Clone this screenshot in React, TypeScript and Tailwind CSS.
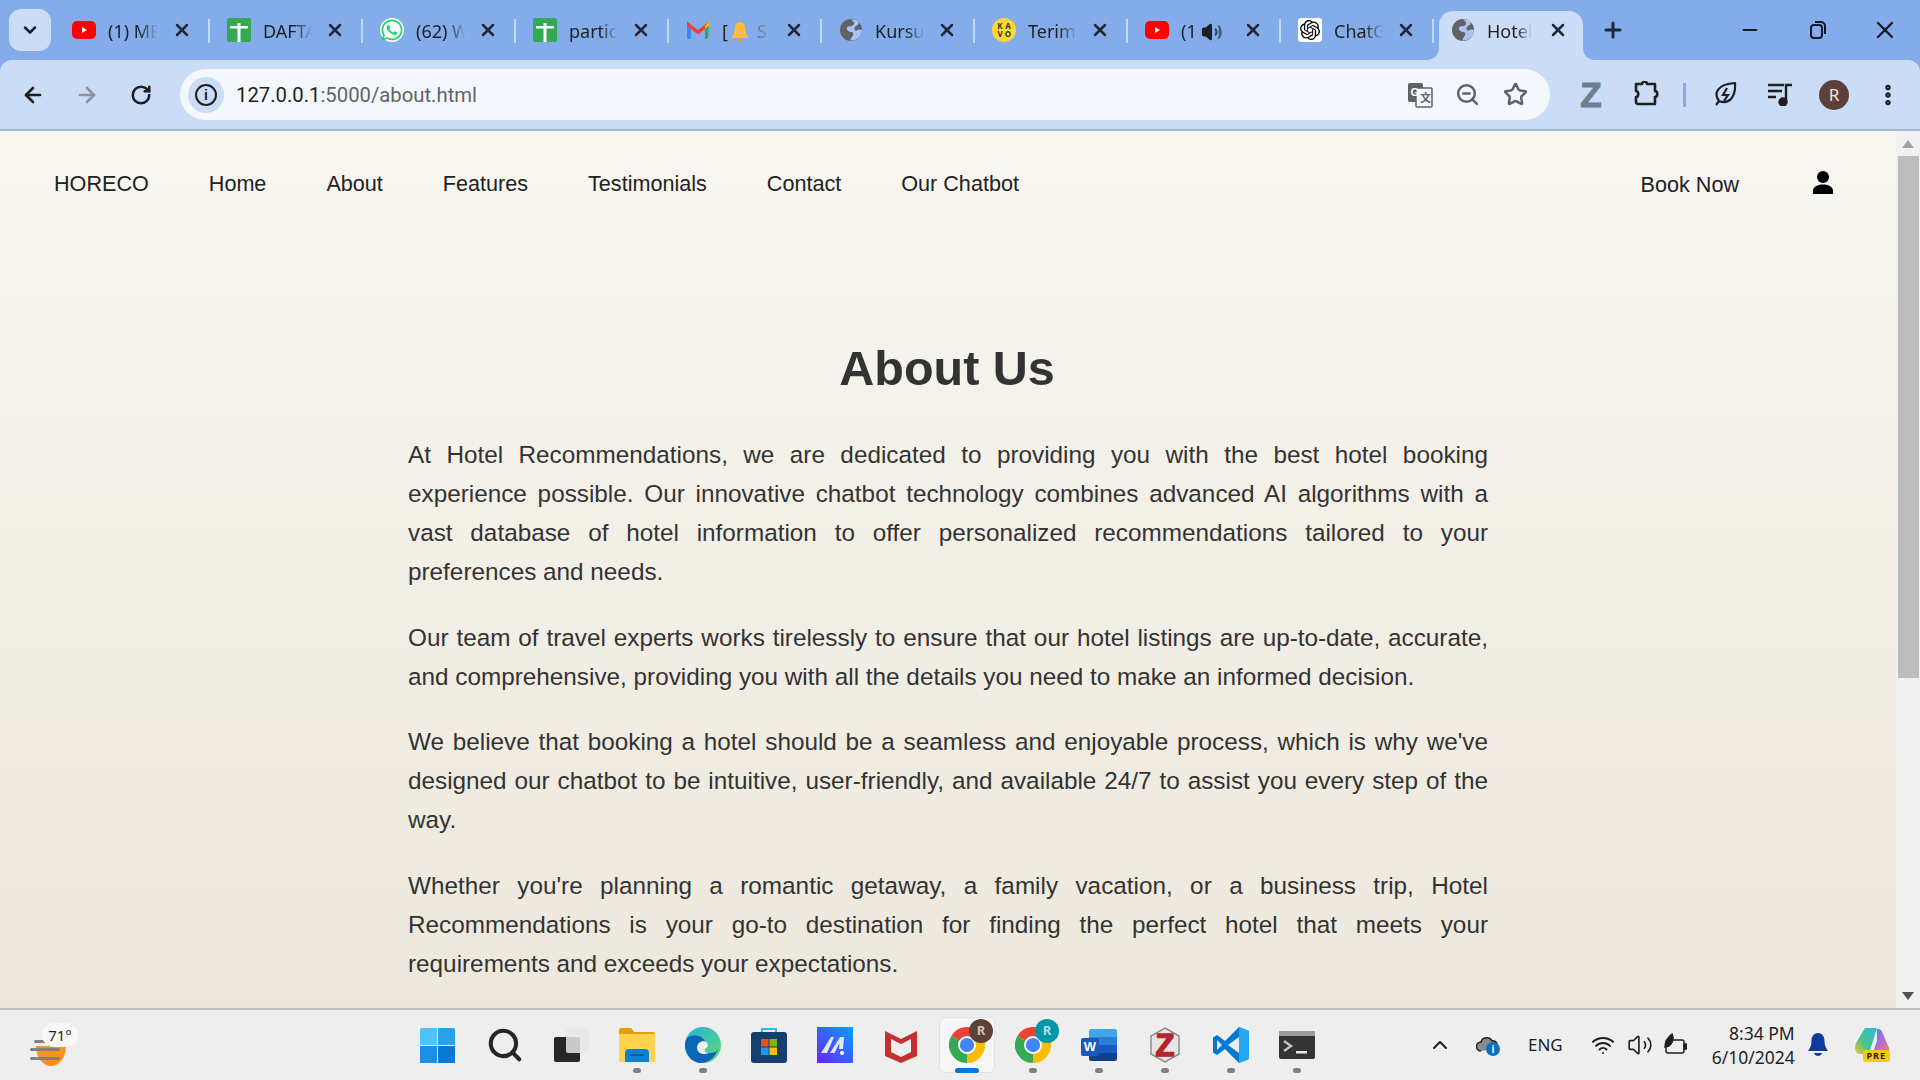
import { ArrowLeft, ArrowRight, RotateCw, X, Plus, Minus, ChevronDown, ChevronUp, Search, ZoomOut, Star, EllipsisVertical, Wifi, Volume2 } from 'lucide-react';
import { FaWhatsapp } from 'react-icons/fa';
import { SiOpenai } from 'react-icons/si';
import type { ReactNode } from 'react';

const YouTube = () => (
  <svg width="24" height="24" viewBox="0 0 24 24"><rect y="3" width="24" height="18" rx="5" fill="#f00" /><path d="M10 9l5 3-5 3z" fill="#fff" /></svg>
);
const Sheets = () => (
  <svg width="24" height="24" viewBox="0 0 24 24"><rect width="24" height="24" rx="2" fill="#34a853" /><path d="M10.500 5h3v3h7.500v2.500h-7.500V24h-3V10.500H3V8h7.500z" fill="#fff" /></svg>
);
const Whatsapp = () => (
  <div className="w-6 h-6 rounded-full bg-white flex items-center justify-center text-[#25d366]"><FaWhatsapp size={24} /></div>
);
const Gmail = () => (
  <svg width="24" height="24" viewBox="0 0 24 24">
    <path d="M1 5l4 3v13H2.500A1.500 1.500 0 011 19.500z" fill="#4285f4" />
    <path d="M23 5l-4 3v13h1.500a1.500 1.500 0 001.500-1.500z" fill="#34a853" />
    <path d="M1 3.500L12 12l11-8.500V8l-11 8.500L1 8z" fill="#ea4335" />
    <path d="M19 8l4-4.500V8l-4 3z" fill="#fbbc04" />
  </svg>
);
const Globe = () => (
  <svg width="24" height="24" viewBox="0 0 24 24">
    <circle cx="12" cy="12" r="11" fill="#5f6368" />
    <path d="M12 1.500c3 2 4 3.500 2.500 5.500S9 7.500 8 9.500 9.500 14 12 14s3 2 1.500 4-2 3.500-2 4.500A10.500 10.500 0 0023 12c-2-1-4-.5-5 .5s-3-.500-2.500-2.500 2-2 3.500-3.500 0-3-1-4a10 10 0 00-6-1z" fill="#a9c4ee" />
  </svg>
);
const Terima = () => (
  <div className="w-6 h-6 rounded-full bg-[#fdd835] grid grid-cols-2 place-items-center px-1 py-1 text-[8px] leading-none font-bold text-[#333]">
    <span>K</span><span>A</span><span>V</span><span>O</span>
  </div>
);
const Bell = () => (
  <svg width="18" height="20" viewBox="0 0 18 20" className="shrink-0"><path d="M9 0c4 0 5.500 4 5.500 8 0 3 1 5 3.500 8H0c2.500-3 3.500-5 3.500-8C3.500 4 5 0 9 0z" fill="#fbbc3d" /><circle cx="9" cy="18" r="2" fill="#f59e0b" /></svg>
);

const tabs: { icon: ReactNode; label: ReactNode }[] = [
  { icon: <YouTube />, label: '(1) ME' },
  { icon: <Sheets />, label: 'DAFTA' },
  { icon: <Whatsapp />, label: '(62) W' },
  { icon: <Sheets />, label: 'partici' },
  { icon: <Gmail />, label: <span className="flex items-center"><span>[</span><span className="ml-[3px]"><Bell /></span><span className="ml-2 text-[#5f6368]">S</span></span> },
  { icon: <Globe />, label: 'Kursus' },
  { icon: <Terima />, label: 'Terima' },
  { icon: <YouTube />, label: <span className="flex items-center">(1<Volume2 size={22} className="shrink-0 ml-1 text-[#1f1f1f] fill-[#1f1f1f]" /></span> },
  { icon: <div className="w-6 h-6 rounded-[3px] bg-white flex items-center justify-center text-black"><SiOpenai size={20} /></div>, label: 'ChatG' },
];

const Tab = ({ icon, label, first }: { icon: ReactNode; label: ReactNode; first: boolean }) => (
  <div className={`${first ? 'w-[155px]' : 'w-[153px]'} h-[49px] flex items-center pl-[17px] pb-[11px] relative shrink-0`}>
    <div className="w-6 h-6 shrink-0">{icon}</div>
    <div className="ml-3 mt-[3px] w-[56px] whitespace-nowrap text-[18px] text-[#1f1f1f] [mask-image:linear-gradient(to_right,black_55%,transparent_88%)]">{label}</div>
    <X size={20} strokeWidth={3} className="absolute right-[18px] top-[9px] text-[#1f2937]" />
    <div className="absolute right-0 top-[8px] w-[2px] h-6 bg-[#c7d8f3]" />
  </div>
);

const TabStrip = () => (
  <div className="h-[60px] bg-[#84acea] flex items-end shrink-0 relative">
    <div className="absolute left-[9px] top-[9px] w-[42px] h-[42px] rounded-xl bg-[#cadcf6] flex items-center justify-center">
      <ChevronDown size={20} strokeWidth={3} className="text-[#1f1f1f]" />
    </div>
    <div className="ml-[55px] flex items-end">
      {tabs.map((t, i) => <Tab key={i} icon={t.icon} label={t.label} first={i === 0} />)}
      <div className="w-[144px] h-[49px] ml-[5px] bg-[#cadcf6] rounded-t-[14px] flex items-center pl-3 pb-[11px] relative shrink-0">
        <div className="w-6 h-6 shrink-0"><Globe /></div>
        <div className="ml-3 mt-[3px] w-[50px] whitespace-nowrap text-[18px] text-[#1f1f1f] [mask-image:linear-gradient(to_right,black_60%,transparent_90%)]">Hotel</div>
        <X size={20} strokeWidth={3} className="absolute left-[109px] top-[9px] text-[#1f2937]" />
        <svg className="absolute -left-3 bottom-0" width="12" height="12" viewBox="0 0 12 12"><path d="M12 0v12H0c7 0 12-5 12-12z" fill="#cadcf6" /></svg>
        <svg className="absolute -right-3 bottom-0" width="12" height="12" viewBox="0 0 12 12"><path d="M0 0v12h12C5 12 0 7 0 0z" fill="#cadcf6" /></svg>
      </div>
      <Plus size={24} strokeWidth={3} className="ml-[18px] mb-[18px] text-[#1f2937]" />
    </div>
    <div className="ml-auto flex items-center h-full text-[#111827]">
      <div className="w-[68px] flex justify-center"><Minus size={22} strokeWidth={2} /></div>
      <div className="w-[68px] flex justify-center">
        <svg width="18" height="20" viewBox="0 0 18 20" fill="none" stroke="currentColor" strokeWidth="2"><rect x="2" y="5" width="11" height="13" rx="3" /><path d="M6 2h6a4 4 0 014 4v8" /></svg>
      </div>
      <div className="w-[68px] flex justify-center pr-[2px]"><X size={28} strokeWidth={2} /></div>
    </div>
  </div>
);

const Toolbar = () => (
  <div className="h-[71px] bg-[#84acea] shrink-0">
    <div className="h-full bg-[#cadcf6] rounded-t-[12px] border-b-2 border-[#a6b6d2] flex items-start pt-[9px] pl-[6px]">
      <div className="w-[54px] h-[51px] flex items-center justify-center text-[#1f1f1f]"><ArrowLeft size={24} strokeWidth={2.600} /></div>
      <div className="w-[54px] h-[51px] flex items-center justify-center text-[#8a929e]"><ArrowRight size={24} strokeWidth={2.600} /></div>
      <div className="w-[54px] h-[51px] flex items-center justify-center text-[#1f1f1f]"><RotateCw size={22} strokeWidth={2.800} /></div>
      <div className="ml-3 w-[1370px] h-[51px] rounded-full bg-[#f4f7fc] flex items-center pl-2">
        <div className="w-[36px] h-[36px] rounded-full bg-[#cadcf6] flex items-center justify-center">
          <div className="w-[22px] h-[22px] rounded-full border-2 border-[#1f1f1f] flex items-center justify-center text-[14px] font-bold leading-none text-[#1f1f1f] font-['Liberation_Sans',sans-serif]">i</div>
        </div>
        <div className="ml-[12px] mt-px text-[20.300px] text-[#5f6368] font-['Roboto',sans-serif]"><span className="text-[#1f1f1f]">127.0.0.1</span>:5000/about.html</div>
        <div className="ml-auto flex items-center text-[#5f6368]">
          <svg width="26" height="26" viewBox="0 0 26 26" className="mr-[22px]"><rect x="1" y="1" width="15" height="19" rx="2" fill="#5f6368" /><rect x="9" y="6" width="16" height="19" rx="1" fill="#f4f7fc" stroke="#5f6368" strokeWidth="1.500" /><text x="3.500" y="14" fontSize="11" fontWeight="700" fill="#fff" fontFamily="Liberation Sans">G</text><text x="13" y="20" fontSize="11" fontWeight="700" fill="#5f6368" fontFamily="Noto Sans CJK SC">文</text></svg>
          <ZoomOut size={25} strokeWidth={2.400} className="mr-[23px]" />
          <Star size={25} strokeWidth={2.400} className="mr-[22px]" />
        </div>
      </div>
      <div className="ml-[31px] w-5 h-[51px] flex items-center justify-center text-[35px] leading-none font-bold text-[#6b7f92] [-webkit-text-stroke:1px_#6b7f92] font-['Liberation_Sans',sans-serif]">Z</div>
      <svg width="26" height="26" viewBox="0 0 26 26" fill="none" stroke="#1f1f1f" strokeWidth="2.600" className="ml-[32px] mt-[12px]"><path d="M3 3h6c0-3 5-3 5 0h8v7c3 0 3 6 0 6v7H5c-1 0-2-1-2-2v-5c3 0 3-6 0-6z" strokeLinejoin="round" /></svg>
      <div className="ml-[24px] mt-[14px] w-[3px] h-6 bg-[#84acea]" />
      <svg width="24" height="26" viewBox="0 0 24 26" fill="none" stroke="#1f1f1f" strokeWidth="2.200" className="ml-[27px] mt-[12px]"><path d="M3 24l3-4M6 20C0 12 5 3 22 2c1 14-6 22-16 18z" strokeLinejoin="round" /><path d="M14 7l-4 7h5l-4 6" /></svg>
      <svg width="24" height="24" viewBox="0 0 24 24" fill="none" stroke="#1f1f1f" strokeWidth="2.400" className="ml-[31px] mt-[13px]"><path d="M0 3h16M0 9h14M0 15h8M18 20V3h6" /><circle cx="15" cy="20" r="3.500" fill="#1f1f1f" /></svg>
      <div className="ml-[27px] mt-[11px] w-[30px] h-[30px] rounded-full bg-[#5d4037] flex items-center justify-center text-[#f5e6df] text-[17px] font-['Noto_Sans',sans-serif]">R</div>
      <EllipsisVertical size={26} strokeWidth={3} className="ml-[26px] mt-[13px] text-[#1f1f1f]" />
    </div>
  </div>
);

const navLinks = ['Home', 'About', 'Features', 'Testimonials', 'Contact', 'Our Chatbot'];

const paragraphs = [
  'At Hotel Recommendations, we are dedicated to providing you with the best hotel booking experience possible. Our innovative chatbot technology combines advanced AI algorithms with a vast database of hotel information to offer personalized recommendations tailored to your preferences and needs.',
  'Our team of travel experts works tirelessly to ensure that our hotel listings are up-to-date, accurate, and comprehensive, providing you with all the details you need to make an informed decision.',
  "We believe that booking a hotel should be a seamless and enjoyable process, which is why we've designed our chatbot to be intuitive, user-friendly, and available 24/7 to assist you every step of the way.",
  "Whether you're planning a romantic getaway, a family vacation, or a business trip, Hotel Recommendations is your go-to destination for finding the perfect hotel that meets your requirements and exceeds your expectations.",
];

const Page = () => (
  <div className="flex-1 min-w-0 overflow-hidden bg-gradient-to-b from-[#f8f6f1] to-[#ede8dc] font-['Liberation_Sans',sans-serif]">
    <nav className="h-[106px] flex items-center pl-[54px] pr-[63px] text-[21.600px] text-[#222]">
      <div className="flex gap-[60px] mt-px">
        <span>HORECO</span>
        {navLinks.map((l) => <span key={l}>{l}</span>)}
      </div>
      <span className="ml-auto mt-[2px]">Book Now</span>
      <svg width="20" height="23" viewBox="0 0 20 23" className="ml-[74px] -mt-[4px]"><circle cx="10" cy="6" r="6" fill="#000" /><path d="M0 23v-3c0-4 4-6.500 10-6.500s10 2.500 10 6.500v3z" fill="#000" /></svg>
    </nav>
    <main className="w-[1080px] mx-auto mt-[102px]">
      <h1 className="text-[48.500px] leading-[58px] font-bold text-[#333] text-center mb-[38px] -translate-x-px">About Us</h1>
      {paragraphs.map((p, i) => (
        <p key={i} className="text-[24.300px] leading-[39px] text-[#333] text-justify mb-[26.700px]">{p}</p>
      ))}
    </main>
  </div>
);

const ScrollBar = () => (
  <div className="w-6 bg-[#f1f1f1] flex flex-col items-center shrink-0">
    <div className="h-[25px] flex items-center justify-center w-full"><div className="w-0 h-0 border-x-[6px] border-x-transparent border-b-[8px] border-b-[#a3a3a3]" /></div>
    <div className="w-[21px] h-[522px] bg-[#bdbdbd]" />
    <div className="mt-auto h-[25px] flex items-center justify-center w-full"><div className="w-0 h-0 border-x-[6px] border-x-transparent border-t-[8px] border-t-[#505050]" /></div>
  </div>
);

const ChromeLogo = ({ badgeBg }: { badgeBg: string }) => (
  <div className="relative w-9 h-9">
    <svg width="36" height="36" viewBox="0 0 48 48">
      <path d="M24 24L3.200 12A24 24 0 0144.800 12z" fill="#ea4335" />
      <path d="M24 24L3.200 12A24 24 0 0024 48z" fill="#34a853" />
      <path d="M24 24L44.800 12A24 24 0 0124 48z" fill="#fbbc04" />
      <circle cx="24" cy="24" r="12" fill="#fff" /><circle cx="24" cy="24" r="9.500" fill="#4285f4" />
    </svg>
    <div className={`absolute -top-[8px] -right-[8px] w-6 h-6 rounded-full flex items-center justify-center text-[13px] font-bold text-white/70 font-['Noto_Sans',sans-serif] ${badgeBg}`}>R</div>
  </div>
);

const slots: { icon: ReactNode; dot?: boolean; active?: boolean }[] = [
  { icon: <div className="grid grid-cols-2 gap-[1px] w-[35px] h-[35px] -translate-x-[2px]"><div className="bg-[#4fc3f7] rounded-tl-[2px]" /><div className="bg-[#29a0ea] rounded-tr-[2px]" /><div className="bg-[#1a8fe3]" /><div className="bg-[#0a78d4]" /></div> },
  { icon: <Search size={38} strokeWidth={2.600} className="text-[#262626]" /> },
  { icon: <svg width="36" height="36" viewBox="0 0 36 36"><rect x="1" y="10" width="26" height="25" rx="2" fill="#262626" /><rect x="13" y="1" width="23" height="25" rx="2" fill="#e8e8e8" fillOpacity="0.85" /></svg> },
  { dot: true, icon: <svg width="36" height="36" viewBox="0 0 36 36"><path d="M0 3a2 2 0 012-2h10l3 4h19a2 2 0 012 2v28H0z" fill="#e3a008" /><path d="M0 7h36v28H0z" fill="#ffd250" /><path d="M6 35V26a4 4 0 014-4h16a4 4 0 014 4v9z" fill="#0f7fd1" /><rect x="11" y="27" width="14" height="2" fill="#0b5fa3" /></svg> },
  { dot: true, icon: <svg width="36" height="36" viewBox="0 0 36 36"><defs><linearGradient id="e1" x1="0" y1="0" x2="1" y2="1"><stop offset="0" stopColor="#27b4e0" /><stop offset="1" stopColor="#62d96b" /></linearGradient></defs><circle cx="18" cy="18" r="18" fill="url(#e1)" /><path d="M0 18C0 9 8 7 14 9c6 2 8 8 5 11-3 2 0 6 5 6 4 0 7-1 9-4-3 9-10 14-17 14C7 36 0 28 0 18z" fill="#0c66b8" /><path d="M12 21c0-5 5-8 9-6 3 2 2 5 0 6-3 2-1 5 3 5-7 3-12-1-12-5z" fill="#eeeeee" /></svg> },
  { icon: <svg width="36" height="36" viewBox="0 0 36 36"><path d="M11 7V2h14v5" fill="none" stroke="#29b6f6" strokeWidth="2" /><rect y="5" width="36" height="31" rx="3" fill="#173f6e" /><rect x="10" y="12" width="7.500" height="7.500" fill="#e8502a" /><rect x="18.500" y="12" width="7.500" height="7.500" fill="#7cb518" /><rect x="10" y="20.500" width="7.500" height="7.500" fill="#1c9be6" /><rect x="18.500" y="20.500" width="7.500" height="7.500" fill="#fbbc04" /></svg> },
  { icon: <svg width="36" height="36" viewBox="0 0 36 36"><defs><linearGradient id="m1" x1="0" y1="1" x2="1" y2="0"><stop offset="0" stopColor="#6b21ff" /><stop offset="1" stopColor="#08a0ff" /></linearGradient></defs><rect width="36" height="36" fill="url(#m1)" /><path d="M4 26L14 10h3l-7 16zM13 26l10-16h4l-1 12h-4l.5-6-5 10z" fill="#e0e7ff" /><circle cx="25" cy="26" r="2" fill="#fff" /></svg> },
  { icon: <svg width="32" height="36" viewBox="0 0 32 36"><path d="M0 4l16 8 16-8v25l-16 7-16-7z" fill="#c62f2f" /><path d="M6 12l10 5 10-5v13l-10 5-10-5z" fill="#eeeeee" /></svg> },
  { active: true, icon: <ChromeLogo badgeBg="bg-[#5d4037]" /> },
  { dot: true, icon: <ChromeLogo badgeBg="bg-[#0097a7]" /> },
  { dot: true, icon: <div className="relative w-9 h-8 flex justify-end"><div className="w-7 h-8 rounded-[2px] flex flex-col overflow-hidden"><div className="flex-1 bg-[#41a5ee]" /><div className="flex-1 bg-[#2b7cd3]" /><div className="flex-1 bg-[#185abd]" /><div className="flex-1 bg-[#103f91]" /></div><div className="absolute left-0 top-[9px] w-[18px] h-[18px] bg-[#185abd] rounded-[2px] flex items-center justify-center text-white text-[13px] font-bold font-['Liberation_Sans',sans-serif]">W</div></div> },
  { dot: true, icon: <div className="relative w-[30px] h-9 flex items-center justify-center"><svg width="30" height="36" viewBox="0 0 30 36" className="absolute"><path d="M15 1l14 8v18l-14 8-14-8V9z" fill="#e5e5e5" stroke="#8d8d8d" strokeWidth="1.500" /></svg><span className="relative text-[31px] font-bold text-[#b3262b] [-webkit-text-stroke:1.500px_#b3262b] leading-none font-['Liberation_Sans',sans-serif]">Z</span></div> },
  { dot: true, icon: <svg width="36" height="36" viewBox="0 0 36 36"><path d="M26 0L12 14 4 8 0 10.500v15L4 28l8-6 14 14 10-4V4z" fill="#0078d4" /><path d="M26 0l10 4v28l-10 4z" fill="#23a9f2" /><path d="M26 10L15 18l11 8z" fill="#eeeeee" /><path d="M4 13l5 5-5 5z" fill="#eeeeee" /></svg> },
  { dot: true, icon: <svg width="36" height="28" viewBox="0 0 36 28"><rect width="36" height="28" rx="2" fill="#333" /><path d="M0 2a2 2 0 012-2h32a2 2 0 012 2v3H0z" fill="#9b9b9b" /><path d="M5 10l7 5-7 5" fill="none" stroke="#c0c0c0" strokeWidth="2.500" /><rect x="17" y="20" width="11" height="2.500" fill="#e6e6e6" /></svg> },
];

const Taskbar = () => (
  <div className="h-[72px] bg-[#eeeeee] border-t-2 border-[#bfbfbf] flex items-center shrink-0 font-['Noto_Sans',sans-serif] text-[#1f1f1f]">
    <div className="w-[406px] pl-[30px] shrink-0">
      <div className="relative w-[38px] h-[42px]">
        <svg width="38" height="42" viewBox="0 0 38 42" className="absolute left-0 top-0"><path d="M6 22h30c0 12-7 20-15 20S6 34 6 22z" fill="#f7931e" /><rect x="4" y="16" width="28" height="3" rx="1.500" fill="#808080" /><rect x="0" y="24" width="30" height="3" rx="1.500" fill="#808080" /><rect x="0" y="33" width="30" height="3" rx="1.500" fill="#808080" /></svg>
        <div className="absolute left-[12px] -top-[1px] w-[36px] h-[24px] rounded-full bg-[#f8f8f8] text-[15px] leading-[24px] text-center">71°</div>
      </div>
    </div>
    <div className="flex">
      {slots.map((s, i) => (
        <div key={i} className="w-[66px] h-[70px] flex items-center justify-center relative">
          {s.active && <div className="absolute left-[5px] top-[7px] w-[56px] h-[56px] rounded-md bg-[#f6f6f6] border border-[#e3e3e3]" />}
          <div className="relative flex items-center justify-center">{s.icon}</div>
          {s.dot && <div className="absolute bottom-[7px] left-[29px] w-2 h-[5px] rounded-full bg-[#808080]" />}
          {s.active && <div className="absolute bottom-[7px] left-[21px] w-6 h-[5px] rounded-full bg-[#0078d4]" />}
        </div>
      ))}
    </div>
    <div className="ml-[98px] flex items-center">
      <ChevronUp size={24} strokeWidth={2} />
      <div className="relative ml-[24px] w-[24px] h-[22px]">
        <svg width="22" height="18" viewBox="0 0 22 18"><path d="M5 17a4.500 4.500 0 010-9c1-5 9-6 11-1a4 4 0 012 8" fill="#8a8a8a" stroke="#222" strokeWidth="1.500" /></svg>
        <div className="absolute right-0 bottom-0 w-[14px] h-[14px] rounded-full bg-[#0b6fc4] text-white text-[10px] leading-[14px] text-center font-bold">i</div>
      </div>
      <span className="ml-[28px] text-[17px]">ENG</span>
      <Wifi size={24} strokeWidth={2} className="ml-[28px]" />
      <Volume2 size={26} strokeWidth={1.500} className="ml-3" />
      <svg width="24" height="24" viewBox="0 0 24 24" fill="none" stroke="#1f1f1f" strokeWidth="1.500" className="ml-2.5"><rect x="3" y="7" width="18" height="13" rx="2" /><rect x="21" y="11" width="3" height="5" fill="#1f1f1f" /><path d="M2 14C2 8 5 4 9 1c2 4 1 9-3 12z" fill="#1f1f1f" /></svg>
      <div className="ml-[24px] w-[84px] text-right text-[17.500px] leading-[24px] whitespace-nowrap flex flex-col items-end">
        <span>8:34 PM</span>
        <span>6/10/2024</span>
      </div>
      <svg width="20" height="24" viewBox="0 0 20 24" className="ml-[13px]"><path d="M10 0c4.500 0 6.500 4 6.500 8 0 4 1 6.500 3.500 10H0c2.500-3.500 3.500-6 3.500-10C3.500 4 5.500 0 10 0z" fill="#0f3a9d" /><path d="M6 20h8c-1 4-7 4-8 0z" fill="#0f3a9d" /></svg>
      <div className="relative ml-[27px] w-[35px] h-[34px]">
        <svg width="35" height="28" viewBox="0 0 35 28"><defs><linearGradient id="c1" x1="0" y1="1" x2="1" y2="0"><stop offset="0" stopColor="#f5c518" /><stop offset="0.4" stopColor="#4cc38a" /><stop offset="1" stopColor="#2fb8e8" /></linearGradient><linearGradient id="c2" x1="0" y1="0" x2="1" y2="1"><stop offset="0" stopColor="#2f8fe8" /><stop offset="0.5" stopColor="#b46ad8" /><stop offset="1" stopColor="#f08a5d" /></linearGradient></defs><path d="M10 0h12l-8 26H5C0 26-1 20 1 15z" fill="url(#c1)" /><path d="M22 1c3 0 5 1 6 5l6 14c1 4-1 7-5 7H17l5-14z" fill="url(#c2)" /></svg>
        <div className="absolute right-0 bottom-0 w-[27px] h-[12px] rounded-[3px] bg-[#f9c80e] text-[9px] leading-[12px] text-center font-bold tracking-[1px] text-[#222]">PRE</div>
      </div>
    </div>
  </div>
);

export default function App() {
  return (
    <div className="w-[1920px] h-[1080px] flex flex-col overflow-hidden font-['Noto_Sans',sans-serif]">
      <TabStrip />
      <Toolbar />
      <div className="flex flex-1 min-h-0">
        <Page />
        <ScrollBar />
      </div>
      <Taskbar />
    </div>
  );
}
